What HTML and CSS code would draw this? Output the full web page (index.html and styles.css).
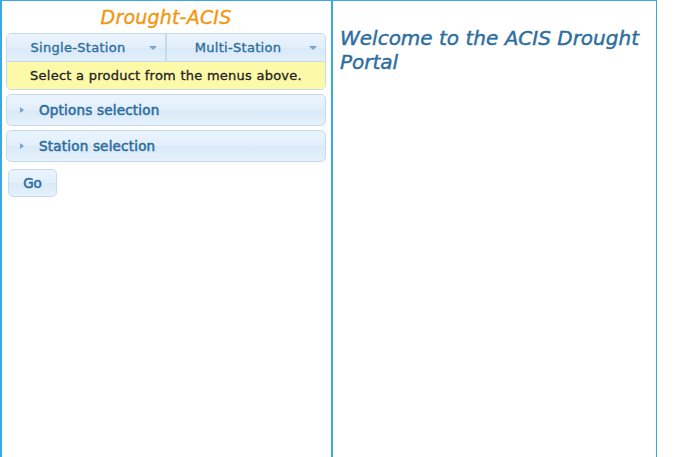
FILE: index.html
```html
<!DOCTYPE html>
<html>
<head>
<meta charset="utf-8">
<title>Drought-ACIS</title>
<link rel="stylesheet" href="styles.css">
</head>
<body>
<div class="page">
  <div class="left">
    <div class="title">Drought-ACIS</div>
    <div class="menubox">
      <div class="menubar">
        <div class="menu">Single-Station<span class="caret"></span></div>
        <div class="menu">Multi-Station<span class="caret"></span></div>
      </div>
      <div class="notice">Select a product from the menus above.</div>
    </div>
    <div class="acc"><span class="tri"></span>Options selection</div>
    <div class="acc"><span class="tri"></span>Station selection</div>
    <button class="go">Go</button>
  </div>
  <div class="right">
    <h1 class="welcome">Welcome to the ACIS Drought Portal</h1>
  </div>
</div>
</body>
</html>
```
FILE: styles.css
```css
* { box-sizing: border-box; }
html, body { margin: 0; padding: 0; background: #fff; }
body { font-family: "DejaVu Sans", Verdana, sans-serif; font-size: 12px; color: #222; }
.page { display: flex; height: 457px; }
.left {
  width: 332px;
  border-top: 1px solid #3aa9e3;
  border-left: 2px solid #3aa9e3;
  border-right: 1px solid #3aa9e3;
  padding: 0 5px 0 4px;
  display: flex; flex-direction: column;
}
.title {
  height: 32px;
  text-align: center;
  font-style: italic;
  font-size: 19px;
  line-height: 32px;
  letter-spacing: 0.2px;
  color: #f3960f;
  -webkit-text-stroke: 0.35px #f3960f;
}
.menubox {
  border: 1px solid #c5dbec;
  border-radius: 5px;
  overflow: hidden;
}
.menubar { display: flex; height: 28px; border-bottom: 1px solid #c5dbec; }
.menu {
  flex: 1;
  position: relative;
  background: linear-gradient(#eaf4fd 0%, #e2effb 50%, #d9e9f8 51%, #e3f0fb 100%);
  color: #2e6e9e;
  font-size: 13px;
  line-height: 27px;
  letter-spacing: 0.3px;
  -webkit-text-stroke: 0.35px #2e6e9e;
  text-align: center;
  padding-right: 16px;
}
.menu + .menu { border-left: 2px solid #c5dbec; }
.caret {
  position: absolute;
  right: 8px; top: 12px;
  width: 0; height: 0;
  border-left: 4px solid transparent;
  border-right: 4px solid transparent;
  border-top: 4px solid #7aa3c8;
}
.notice {
  background: #fcf9a8;
  height: 27px;
  line-height: 27px;
  text-align: center;
  font-size: 13px;
  letter-spacing: 0.25px;
  color: #222;
  -webkit-text-stroke: 0.3px #222;
}
.acc {
  margin-top: 4px;
  height: 32px;
  border: 1px solid #c5dbec;
  border-radius: 5px;
  background: linear-gradient(#eaf4fd 0%, #e2effb 50%, #d9e9f8 51%, #e6f2fc 100%);
  color: #2e6e9e;
  font-size: 13.5px;
  letter-spacing: 0.2px;
  -webkit-text-stroke: 0.55px #2e6e9e;
  line-height: 30px;
  padding-left: 13px;
  display: flex; align-items: center;
}
.tri {
  width: 0; height: 0;
  border-top: 3px solid transparent;
  border-bottom: 3px solid transparent;
  border-left: 4px solid #7aa3c8;
  margin-right: 15px;
}
.go {
  align-self: flex-start;
  margin: 7px 0 0 2px;
  width: 49px; height: 28px;
  border: 1px solid #c5dbec;
  border-radius: 5px;
  background: linear-gradient(#eaf4fd 0%, #e2effb 50%, #d9e9f8 51%, #e6f2fc 100%);
  color: #2e6e9e;
  font-family: inherit;
  font-size: 13.5px;
  -webkit-text-stroke: 0.55px #2e6e9e;
  padding: 0;
}
.right {
  width: 325px;
  border-top: 1px solid #3aa9e3;
  border-left: 1px solid #3aa9e3;
  border-right: 1px solid #3aa9e3;
  padding: 0 7px;
}
.welcome {
  margin: 25px 0 0 0;
  font-size: 20px;
  font-weight: normal;
  font-style: italic;
  line-height: 24px;
  color: #2e6e9e;
  -webkit-text-stroke: 0.45px #2e6e9e;
}
```
